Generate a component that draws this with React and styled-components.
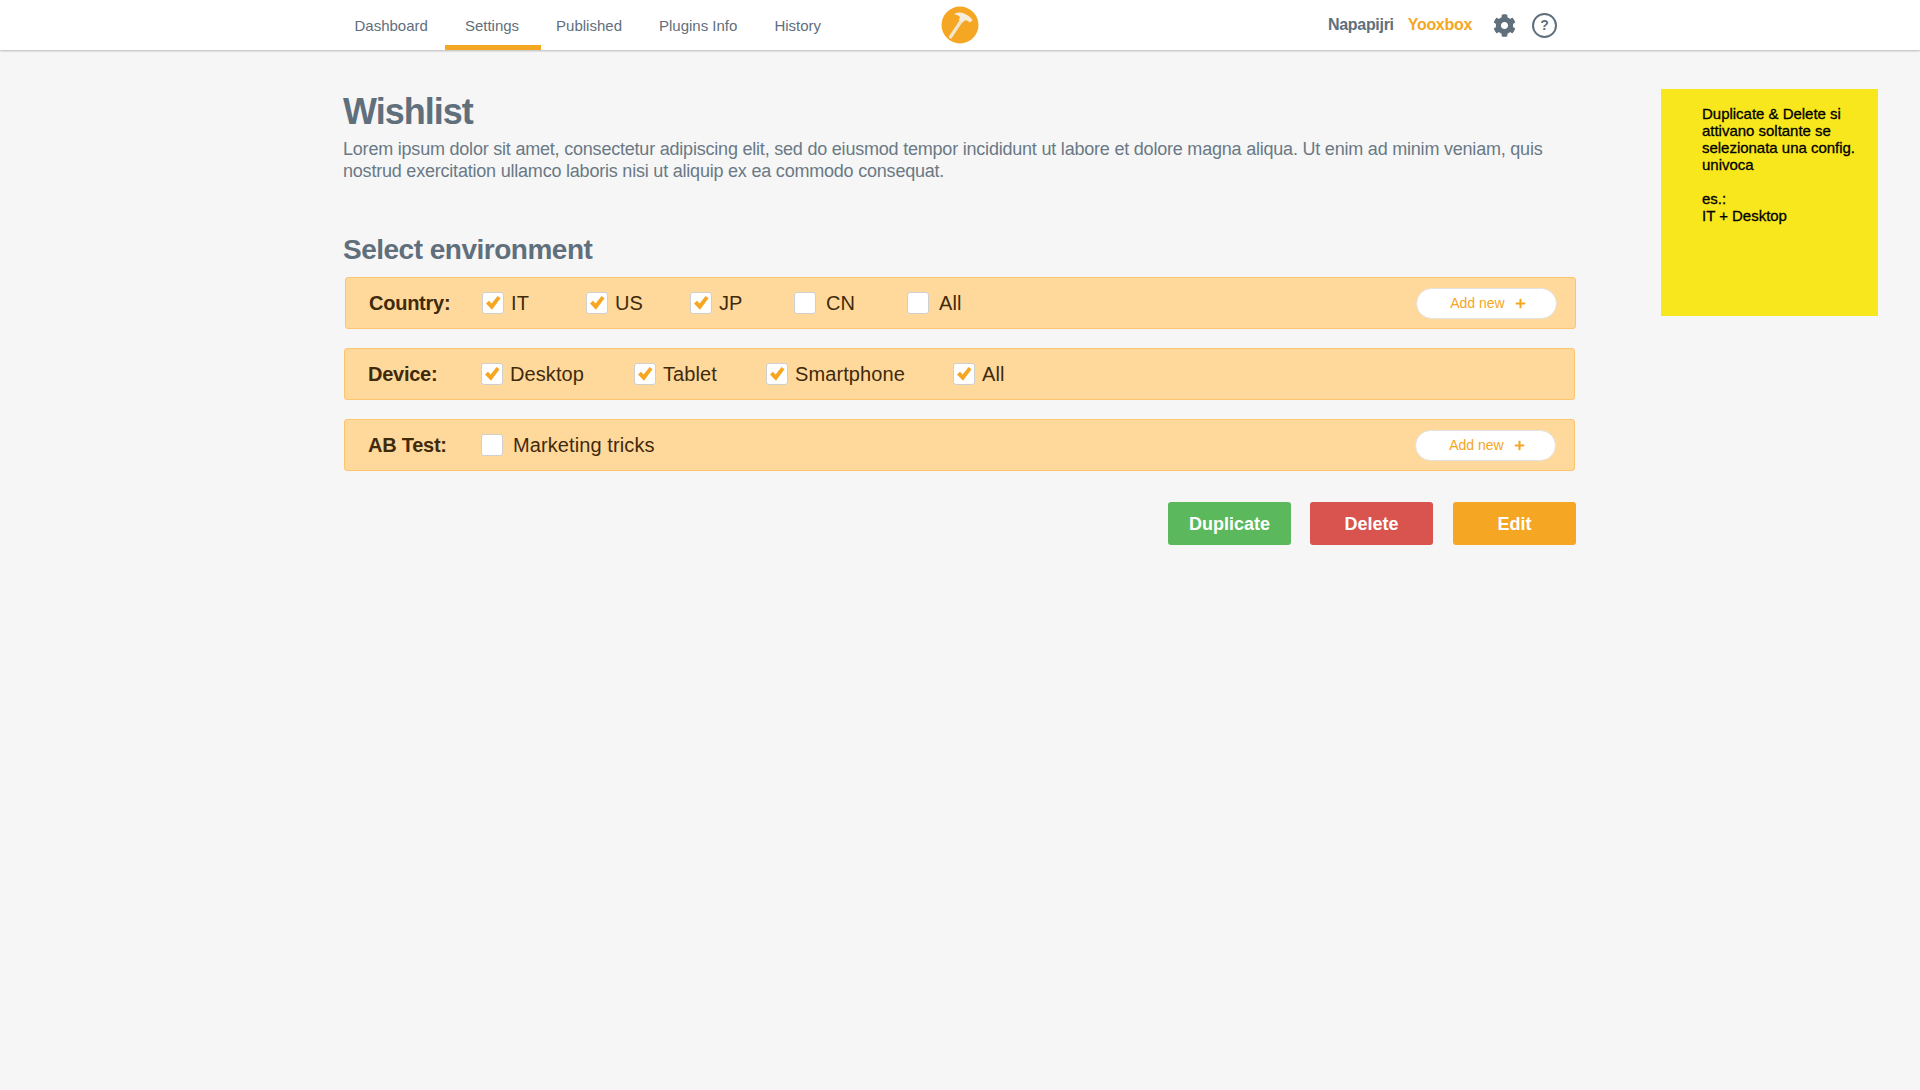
import React from 'react';
import styled, { createGlobalStyle } from 'styled-components';
import { FaCog, FaPlus } from 'react-icons/fa';

const slate = '#5f6f7c';
const orange = '#f5a623';
const brown = '#3f2a0b';

const GlobalStyle = createGlobalStyle`
	html, body {
		margin: 0;
		padding: 0;
		background: #f6f6f6;
	}
	body {
		font-family: "Liberation Sans", Arial, sans-serif;
	}
	* {
		box-sizing: border-box;
	}
`

const Header = styled.header`
	height: 50px;
	display: grid;
	grid-template-columns: 1fr 38px 1fr;
	align-items: center;
	background: #fff;
	box-shadow: 0 1px 2px rgba(0, 0, 0, .25);
`

const Nav = styled.nav`
	display: flex;
	height: 100%;
	padding-left: 336px;
`

const NavItem = styled.a`
	position: relative;
	display: flex;
	align-items: center;
	padding: 0 18.5px;
	font-size: 15px;
	color: ${slate};
	${props => props.$active && `
		&::after {
			content: '';
			position: absolute;
			left: -1px;
			right: -3px;
			bottom: 0;
			height: 5px;
			background: ${orange};
		}
	`}
`

const LogoBadge = styled.svg`
	display: block;
	width: 38px;
	height: 38px;
`

const HeaderRight = styled.div`
	display: flex;
	justify-content: flex-end;
	align-items: center;
	padding-right: 363px;
`

const Brand = styled.span`
	font-size: 16px;
	font-weight: bold;
	letter-spacing: -.3px;
	color: ${props => props.$active ? orange : slate};
	margin-right: ${props => props.$space}px;
`

const GearIcon = styled(FaCog)`
	width: 23px;
	height: 23px;
	color: ${slate};
	margin-right: 16px;
`

const HelpIcon = styled.span`
	width: 25px;
	height: 25px;
	display: flex;
	align-items: center;
	justify-content: center;
	border: 2px solid ${slate};
	border-radius: 50%;
	font-size: 14px;
	font-weight: bold;
	color: ${slate};
`

const Page = styled.div`
	display: flex;
	align-items: flex-start;
	min-height: 1040px;
	padding: 39px 0 0 343px;
`

const Main = styled.main`
	width: 1233px;
	margin-right: 85px;
	flex-shrink: 0;
`

const Title = styled.h1`
	margin: 3px 0 6px;
	font-size: 36px;
	line-height: 40px;
	font-weight: bold;
	letter-spacing: -1px;
	color: ${slate};
`

const Intro = styled.p`
	margin: 0 0 52px;
	font-size: 18px;
	line-height: 22px;
	letter-spacing: -.21px;
	color: #6a7985;
`

const SectionTitle = styled.h2`
	margin: 0 0 11px;
	font-size: 28px;
	line-height: 32px;
	font-weight: bold;
	letter-spacing: -.5px;
	color: ${slate};
`

const Row = styled.div`
	display: flex;
	align-items: center;
	height: 52px;
	margin: 0 ${props => props.$first ? 0 : 1}px 19px ${props => props.$first ? 2 : 1}px;
	padding: 0 18px 0 23px;
	background: #ffd99c;
	border: 1px solid #fdc56f;
	border-radius: 3px;
`

const RowLabel = styled.span`
	width: 113px;
	flex-shrink: 0;
	padding-top: 1px;
	font-size: 20px;
	font-weight: bold;
	letter-spacing: -.25px;
	color: ${brown};
`

const Options = styled.div`
	display: flex;
	align-items: center;
	flex: 1;
`

const Option = styled.label`
	display: flex;
	align-items: center;
	gap: ${props => props.$checked ? 7 : 10}px;
	width: ${props => props.$width ? `${props.$width}px` : 'auto'};
	font-size: 20px;
	letter-spacing: .1px;
	color: ${brown};
`

const OptionText = styled.span`
	padding-top: 1px;
`

const Box = styled.span`
	width: 22px;
	height: 22px;
	display: flex;
	align-items: center;
	justify-content: center;
	background: #fff;
	border: 1px solid #cfcfcf;
	border-radius: 3px;
`

const AddButton = styled.button`
	width: 141px;
	height: 31px;
	display: flex;
	align-items: center;
	justify-content: center;
	gap: 10px;
	padding: 0 0 0 3px;
	background: #fff;
	border: 1px solid #e2e2e2;
	border-radius: 16px;
	font: 14px "Liberation Sans", Arial, sans-serif;
	color: ${orange};
`

const Actions = styled.div`
	display: flex;
	justify-content: flex-end;
	margin-top: 31px;
`

const ActionButton = styled.button`
	width: 123px;
	height: 43px;
	margin-right: ${props => props.$space || 0}px;
	padding: 2px 0 0;
	background: ${props => props.$color};
	border: 0;
	border-radius: 3px;
	font: bold 18px "Liberation Sans", Arial, sans-serif;
	color: #fff;
`

const Note = styled.aside`
	width: 217px;
	height: 227px;
	flex-shrink: 0;
	padding: 16px 20px 0 41px;
	background: #f8e71c;
	font-size: 15px;
	line-height: 17px;
	letter-spacing: -.02px;
	color: #000;
	-webkit-text-stroke: .3px #000;
	white-space: pre-line;
`

const navItems = [
	{ label: 'Dashboard' },
	{ label: 'Settings', active: true },
	{ label: 'Published' },
	{ label: 'Plugins Info' },
	{ label: 'History' },
]

const rows = [
	{
		label: 'Country:',
		addNew: true,
		options: [
			{ label: 'IT', checked: true, width: 104 },
			{ label: 'US', checked: true, width: 104 },
			{ label: 'JP', checked: true, width: 104 },
			{ label: 'CN', width: 113 },
			{ label: 'All' },
		],
	},
	{
		label: 'Device:',
		options: [
			{ label: 'Desktop', checked: true, width: 153 },
			{ label: 'Tablet', checked: true, width: 132 },
			{ label: 'Smartphone', checked: true, width: 187 },
			{ label: 'All', checked: true },
		],
	},
	{
		label: 'AB Test:',
		addNew: true,
		options: [
			{ label: 'Marketing tricks' },
		],
	},
]

const Logo = () => (
	<LogoBadge viewBox="0 0 38 38">
		<circle cx="19" cy="19" r="18.5" fill={orange} />
		<path d="M9.5 31 L21.5 13" stroke="#f3e6d0" strokeWidth="3.2" strokeLinecap="round" />
		<path d="M13.5 7.8 C17 5.8 22 6 25 8.6 C27.5 9.6 30 11.5 31.5 14.4 L28.6 16.6 C27 14.6 25.4 14 24 14.2 L21.6 16.6 L17.8 14 L19 11.2 C17.6 9.4 15.8 8.6 13.5 8.6 Z" fill="#f6ecdc" />
	</LogoBadge>
)

const Tick = () => (
	<svg width="16" height="16" viewBox="0 0 16 16">
		<path d="M1 8.6 L4 5.8 L6.6 8.6 L12.6 1 L15.5 3.2 L7 14.8 Z" fill={orange} />
	</svg>
)

const App = () => {
	return (
		<>
			<GlobalStyle />
			<Header>
				<Nav>
					{navItems.map(item => (
						<NavItem key={item.label} $active={item.active}>{item.label}</NavItem>
					))}
				</Nav>
				<Logo />
				<HeaderRight>
					<Brand $space={14}>Napapijri</Brand>
					<Brand $active $space={21}>Yooxbox</Brand>
					<GearIcon />
					<HelpIcon>?</HelpIcon>
				</HeaderRight>
			</Header>
			<Page>
				<Main>
					<Title>Wishlist</Title>
					<Intro>
						Lorem ipsum dolor sit amet, consectetur adipiscing elit, sed do eiusmod tempor incididunt ut labore et dolore magna aliqua. Ut enim ad minim veniam, quis nostrud exercitation ullamco laboris nisi ut aliquip ex ea commodo consequat.
					</Intro>
					<SectionTitle>Select environment</SectionTitle>
					{rows.map((row, index) => (
						<Row key={row.label} $first={index === 0}>
							<RowLabel>{row.label}</RowLabel>
							<Options>
								{row.options.map(option => (
									<Option key={option.label} $checked={option.checked} $width={option.width}>
										<Box>{option.checked && <Tick />}</Box>
										<OptionText>{option.label}</OptionText>
									</Option>
								))}
							</Options>
							{row.addNew && <AddButton>Add new <FaPlus size={11} /></AddButton>}
						</Row>
					))}
					<Actions>
						<ActionButton $color="#5cb85c" $space={19}>Duplicate</ActionButton>
						<ActionButton $color="#d9534f" $space={20}>Delete</ActionButton>
						<ActionButton $color={orange}>Edit</ActionButton>
					</Actions>
				</Main>
				<Note>{`Duplicate & Delete si attivano soltante se selezionata una config. univoca

es.:
IT + Desktop`}</Note>
			</Page>
		</>
	)
}

export default App;
